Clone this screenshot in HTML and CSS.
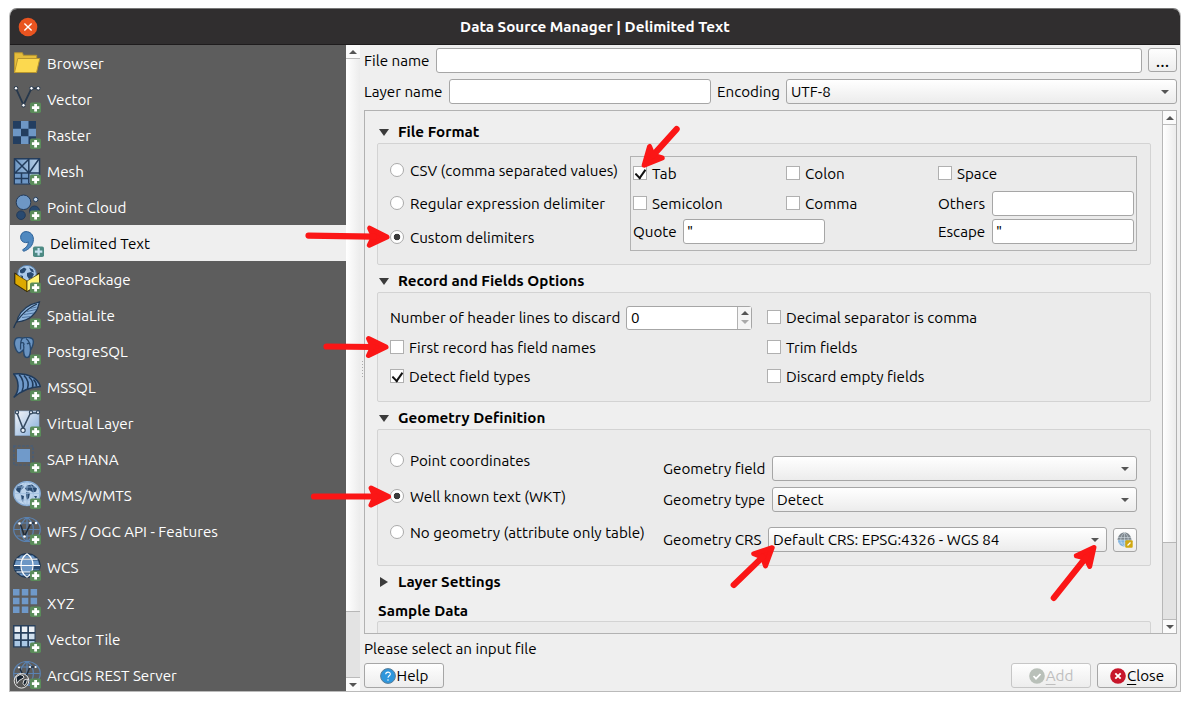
FILE: index.html
```html
<!DOCTYPE html>
<html lang="en">
<head>
<meta charset="utf-8">
<title>Data Source Manager | Delimited Text</title>
<link rel="stylesheet" href="styles.css">
</head>
<body>
<svg class="defs" width="0" height="0">
  <defs>
    <linearGradient id="pale" x1="0" y1="0" x2="1" y2="1"><stop offset="0" stop-color="#f4f6f9"/><stop offset="1" stop-color="#85add9"/></linearGradient>
    <linearGradient id="mid" x1="0" y1="0" x2="1" y2="0"><stop offset="0" stop-color="#6d97c4"/><stop offset="1" stop-color="#b9d0e8"/></linearGradient>
    <symbol id="plus" viewBox="0 0 28 28">
      <rect x="17" y="17.4" width="11" height="10.6" rx="1.8" fill="#5a8c5a"/>
      <path d="M22.600 19v7.400M18.900 22.700h7.400" stroke="#fff" stroke-width="2.800"/>
    </symbol>
    <symbol id="globe" viewBox="0 0 28 28">
      <ellipse cx="14" cy="12.500" rx="13.300" ry="12"/>
      <path d="M1 12.500h26M3.500 6h21M3.500 19h21M14 .5v24M14 .5C5.500 6 5.500 19 14 24.500M14 .5c8.500 5.500 8.500 18.500 0 24"/>
    </symbol>
  </defs>
</svg>
<div class="window">
  <header class="titlebar">
    <svg class="win-close" viewBox="0 0 20 20"><circle cx="10" cy="10" r="9.300" fill="#e95420"/><path d="M6.400 6.400l7.200 7.200M13.600 6.400l-7.200 7.200" stroke="#fff" stroke-width="1.400"/></svg>
    <h1>Data Source Manager | Delimited Text</h1>
  </header>
  <div class="body">
    <nav class="sources">
      <div class="source"><svg viewBox="0 0 28 28"><path d="M1.500 23.500V3.800h8l.8 2.500h13.400v4" fill="#e5bd3c" stroke="#b8962e"/><path d="M1.500 23.500L4.800 9.500h22L23.500 23.500z" fill="#fcd94f" stroke="#b8962e"/></svg><span>Browser</span></div>
      <div class="source"><svg viewBox="0 0 28 28"><path d="M3 3.300L10.500 20 18.500 3.300H25" fill="none" stroke="#27384c" stroke-width="1.800"/><g fill="#fff" stroke="#27384c"><circle cx="3" cy="3.300" r="1.800"/><circle cx="10.500" cy="20.300" r="1.800"/><circle cx="18.500" cy="3.300" r="1.800"/><circle cx="25.200" cy="3.300" r="1.800"/></g><use href="#plus"/></svg><span>Vector</span></div>
      <div class="source"><svg viewBox="0 0 28 28"><path d="M0 0h23v23H0z" fill="#233e60"/><path d="M8 0h7.500v7.700H8zM0 7.700h8v7.600H0zM15.500 7.700H23v7.600h-7.500zM8 15.300h7.500V23H8z" fill="#6e97c5"/><use href="#plus"/></svg><span>Raster</span></div>
      <div class="source"><svg viewBox="0 0 28 28"><rect x="1.500" y="1.800" width="25" height="25" fill="url(#mid)" stroke="#223b5b" stroke-width="1.500"/><path d="M2 17h14v9.500H2z" fill="#6e97c5"/><path d="M1.500 16h25M15.800 2v24.500M2 2l14 14M16 2L2 16M26 2L16 16M8.500 16v10.500M1.500 21.500h14.500" fill="none" stroke="#223b5b" stroke-width="1.500"/><use href="#plus"/></svg><span>Mesh</span></div>
      <div class="source"><svg viewBox="0 0 28 28"><g stroke="#223b5b"><circle cx="10.500" cy="9.300" r="7.300" fill="#6e97c5"/><circle cx="8" cy="22.200" r="4.300" fill="#294a70"/><circle cx="21.500" cy="18" r="5" fill="#294a70"/><circle cx="22.700" cy="6.500" r="2.200" fill="#c5d8ec"/></g><use href="#plus"/></svg><span>Point Cloud</span></div>
      <div class="source selected"><svg viewBox="0 0 28 28"><path d="M10 2.600C14.500 2.600 17.500 6 17.400 10.500 17.300 16 13.500 20.500 7.600 22.300L6.600 20.800C10.500 18.500 12.300 16 12.400 12.900 11.500 13.500 10.500 13.700 9.500 13.600 6.600 13.400 4.600 11.200 4.600 8.300 4.600 5 6.900 2.600 10 2.600z" fill="#5089c0" stroke="#2d6299"/><rect x="17" y="17.400" width="11" height="10.600" rx="1.800" fill="#4d8a83"/><path d="M22.600 19v7.400M18.900 22.700h7.400" stroke="#c9e3f2" stroke-width="2.200"/></svg><span>Delimited Text</span></div>
      <div class="source"><svg viewBox="0 0 28 28"><path d="M1.500 7.500L14 15l12.500-7.500V19L14 27 1.500 19z" fill="#111"/><ellipse cx="14" cy="8.700" rx="9.300" ry="8.300" fill="#abc9e8" stroke="#5a83b0"/><path d="M7 5l4-2.500 2.500 1.500-2 3.500-2.500 1-2-1zM16 2.500l4 2 1 3-3-1zM14 8l4-1 3 2-2 4-3 1-2-3zM7 10l3 1v3z" fill="#284a70"/><path d="M2 8.500L14 16v10.500L2 18.700z" fill="#dda900" stroke="#3a2d00" stroke-width=".7"/><path d="M26.500 8.500L14 16v10.500l12.500-7.800z" fill="#fff375" stroke="#3a2d00" stroke-width=".7"/><use href="#plus"/></svg><span>GeoPackage</span></div>
      <div class="source"><svg viewBox="0 0 28 28"><path d="M26.500.800C19 2.500 9.500 6 5 16.500L4 21c7-1 12-3 15-6 3-3 5-5 6-9z" fill="#8fb5dd" stroke="#203854" stroke-width="1.200"/><path d="M.700 27C3 20 11 9 24 3" fill="none" stroke="#203854" stroke-width="1.300"/><path d="M9 16.500l9-1M11 13.500l10-1.500M14 10.500l9-2M17.500 7.500l6-1.500" stroke="#3d638f" stroke-width=".8"/><use href="#plus"/></svg><span>SpatiaLite</span></div>
      <div class="source"><svg viewBox="0 0 28 28"><path d="M3 1.500C5 .300 7.500.600 9.500 1.200 12 .400 17 0 19.500 2 21.500 4.500 19.500 10 17.500 13 17 17 17.500 20.500 14 20.500 10.500 20.500 11 17 10.500 13 8.500 13.800 7.500 16.500 5.500 15.700 2.500 13.500-.500 5 3 1.500z" fill="#6a94c2" stroke="#28486c" stroke-width="1.400"/><path d="M9.500 1.200C6.500 4.500 8 9 7.500 12.500M10.500 13c1-2 0-3.500 0-5.500M13 1.500c3 2 4.500 6 4.500 11.500M8 6c2-1 3 0 3 2M14 7c1-1 3-1 3 0" fill="none" stroke="#28486c" stroke-width="1.300"/><use href="#plus"/></svg><span>PostgreSQL</span></div>
      <div class="source"><svg viewBox="0 0 28 28"><path d="M.700 1C15-.500 25 5 27.300 13.500 17 14 8 18 .700 24.500 7 18 6 7 .700 1z" fill="#6f99c9" stroke="#203b5b" stroke-width="1.500"/><path d="M6 1.500c5 5 5 12 3 17M11 2.500c4 4 5 9 3.500 13.500M16 4c3.500 3 4.500 6.500 3.500 10.500M20.500 6.500c2 2 3 4 3 7" fill="none" stroke="#203b5b" stroke-width="1.600"/><use href="#plus"/></svg><span>MSSQL</span></div>
      <div class="source"><svg viewBox="0 0 28 28"><rect x="2" y="2" width="24" height="24.500" fill="url(#pale)" stroke="#8fb0d3" stroke-width=".6"/><path d="M4 4l6 15.500L17.500 4H25" fill="none" stroke="#34495f" stroke-width="1.500"/><g fill="#e9f0f7" stroke="#34495f" stroke-width="1.200"><circle cx="4" cy="3.300" r="1.600"/><circle cx="10" cy="21.300" r="2.200"/><circle cx="18" cy="3.300" r="1.600"/><circle cx="25" cy="3.300" r="1.600"/></g><use href="#plus"/></svg><span>Virtual Layer</span></div>
      <div class="source"><svg viewBox="0 0 28 28"><rect x="1" y="1" width="19" height="19" fill="none" stroke="#485d76" stroke-width="1.700" stroke-dasharray="2.500 1.600"/><rect x="4" y="4" width="13" height="13" fill="#709aca"/><use href="#plus"/></svg><span>SAP HANA</span></div>
      <div class="source"><svg viewBox="0 0 28 28"><ellipse cx="14" cy="12.500" rx="13.300" ry="12" fill="#bcd3eb" stroke="#6b93c0" stroke-width="1.300"/><path d="M4 5.500l5-1.500 2 2-3 3-1 3-2-1-2-2zM14 4.500l5-1 5 4-1 3-3 1-3-2-3 .5-2-2.500zM8 14l3 1-1 6-2-3zM13 11l4 1-1 5-2 2-1-4zM21 15l3 0-1 3z" fill="#294a70"/><g fill="none" stroke="#9dbde0" stroke-width=".7"><use href="#globe"/></g><use href="#plus"/></svg><span>WMS/WMTS</span></div>
      <div class="source"><svg viewBox="0 0 28 28"><g fill="none" stroke="#5a82b1" stroke-width="1.200"><use href="#globe"/></g><path d="M7 6l4.500 13L18 6h5" fill="none" stroke="#202c3a" stroke-width="1.500"/><g fill="#fff"><circle cx="6.500" cy="6.500" r="1.300"/><circle cx="11.500" cy="19.500" r="1.300"/><circle cx="17.500" cy="6" r="1.300"/><circle cx="23" cy="6" r="1.300"/></g><use href="#plus"/></svg><span>WFS / OGC API - Features</span></div>
      <div class="source"><svg viewBox="0 0 28 28"><ellipse cx="14" cy="12.500" rx="13.300" ry="12" fill="#294a70" stroke="#1e3550"/><path d="M1.500 12.500L3 7.500h22l1.500 5v4h-25zM8 2.500h12l2 2.500H6zM6 20.500h16l-2 2H8z" fill="#6d97c5"/><path d="M1 12.500h26v3.500H1z" fill="#294a70"/><path d="M9 7h10v12H9z" fill="#6d97c5"/><path d="M1 12.500h26M3.500 6.200h21M3.500 19h21M14 .8C6 6 6 19 14 24.200M14 .8c8 5.200 8 18.200 0 23.400" fill="none" stroke="#fff" stroke-width="1.200"/><use href="#plus"/></svg><span>WCS</span></div>
      <div class="source"><svg viewBox="0 0 28 28"><path d="M0 0h6.500v6.500H0zM8.800 0h6.500v6.500H8.800zM17.600 0h6.500v6.500h-6.500zM0 8.800h6.500v6.500H0zM8.800 8.800h6.500v6.500H8.800zM17.600 8.800h6.500v6.500h-6.500zM0 17.600h6.500v6.500H0zM8.800 17.600h6.500v6.500H8.800z" fill="#6f99c9"/><use href="#plus"/></svg><span>XYZ</span></div>
      <div class="source"><svg viewBox="0 0 28 28"><path d="M0 0h22.500v22.500H0z" fill="#28405c"/><path d="M1.500 1.500H7V7H1.500zM8.800 1.500h5.500V7H8.800zM16 1.500h5.500V7H16z" fill="#eef2f6"/><path d="M1.500 8.800H7v5.500H1.500zM8.800 8.800h5.500v5.500H8.800zM16 8.800h5.500v5.500H16z" fill="#d0dfed"/><path d="M1.500 16H7v5.300H1.500zM8.800 16h5.500v5.300H8.800zM16 16h5.500v5.300H16z" fill="#a9c7e5"/><use href="#plus"/></svg><span>Vector Tile</span></div>
      <div class="source"><svg viewBox="0 0 28 28"><g fill="none" stroke="#5a82b1" stroke-width="1.200"><use href="#globe"/></g><path d="M6 6l6 12L17 6h6" fill="none" stroke="#202c3a" stroke-width="1.500"/><g fill="#fff"><circle cx="6" cy="6.500" r="1.100"/><circle cx="17" cy="6" r="1.100"/><circle cx="22.500" cy="6" r="1.100"/></g><circle cx="8.500" cy="19.800" r="7.300" fill="#555" stroke="#e6e6e6" stroke-width="1"/><path d="M3 16l4-2.500 3 1 1 2-3 2-2 1-2 3zM11 19l3.500-1-1 4-2 2.500-1.500-2z" fill="#17222e" stroke="#eee" stroke-width=".9"/><use href="#plus"/></svg><span>ArcGIS REST Server</span></div>
    </nav>
    <div class="scroll side-scroll"><i class="cap up"></i><i class="thumb"></i><i class="groove"></i><i class="cap down"></i></div>
    <main class="panel">
      <div class="line file-line"><label>File name</label><div class="field"></div><div class="button dots">...</div></div>
      <div class="line layer-line"><label>Layer name</label><div class="field"></div><label>Encoding</label><div class="combo">UTF-8</div></div>
      <div class="frame">
        <div class="content">
          <h2 class="first"><i class="tri open"></i>File Format</h2>
          <section class="group format">
            <div class="radios">
              <label><i class="radio"></i>CSV (comma separated values)</label>
              <label><i class="radio"></i>Regular expression delimiter</label>
              <label><i class="radio on"></i>Custom delimiters</label>
            </div>
            <div class="delims">
              <label><i class="check on"></i>Tab</label><label><i class="check"></i>Colon</label><label><i class="check"></i>Space</label>
              <label><i class="check"></i>Semicolon</label><label><i class="check"></i>Comma</label><div class="pair others"><span>Others</span><div class="field"></div></div>
              <div class="pair quote"><span>Quote</span><div class="field">"</div></div><div class="pair others"><span>Escape</span><div class="field">"</div></div>
            </div>
          </section>
          <h2><i class="tri open"></i>Record and Fields Options</h2>
          <section class="group records">
            <div class="pair header-count"><span>Number of header lines to discard</span><div class="spin"><span>0</span><i></i></div></div><label><i class="check"></i>Decimal separator is comma</label>
            <label><i class="check"></i>First record has field names</label><label><i class="check"></i>Trim fields</label>
            <label><i class="check on"></i>Detect field types</label><label><i class="check"></i>Discard empty fields</label>
          </section>
          <h2><i class="tri open"></i>Geometry Definition</h2>
          <section class="group geometry">
            <div class="radios">
              <label><i class="radio"></i>Point coordinates</label>
              <label><i class="radio on"></i>Well known text (WKT)</label>
              <label><i class="radio"></i>No geometry (attribute only table)</label>
            </div>
            <div class="geo-fields">
              <div class="pair"><span>Geometry field</span><div class="combo"></div></div>
              <div class="pair"><span>Geometry type</span><div class="combo">Detect</div></div>
              <div class="pair crs"><span>Geometry CRS</span><div class="combo">Default CRS: EPSG:4326 - WGS 84</div>
                <div class="button pick"><svg viewBox="0 0 16 16"><path d="M.500 8C1 3 4 .500 7.500.500S14 3 14.500 8z" fill="#7f888f"/><path d="M1 8h13c0 4-3 6.500-6.500 6.500S1 12 1 8z" fill="#7fb3e0"/><path d="M1 5.500h13M.500 8h14M2 11h11M7.500.500v14M7.500.500c-5 4-5 10 0 14M7.500.500c5 4 5 10 0 14" fill="none" stroke="#dfe8ef" stroke-width=".5"/><rect x="8.300" y="8.300" width="7.400" height="7.400" rx="1" fill="#d0a812"/><path d="M10.500 13.500l3-3" stroke="#fff" stroke-width="1.300"/></svg></div>
              </div>
            </div>
          </section>
          <h2 class="settings"><i class="tri shut"></i>Layer Settings</h2>
          <h2 class="sample">Sample Data</h2>
          <section class="group preview"></section>
        </div>
        <div class="scroll form-scroll"><i class="cap up"></i><i class="thumb"></i><i class="groove"></i><i class="cap down"></i></div>
      </div>
      <p class="status">Please select an input file</p>
      <footer class="actions">
        <div class="button"><svg viewBox="0 0 16 16"><circle cx="8" cy="8" r="7.400" fill="#2e96dc" stroke="#5b7d96"/><path d="M5.700 6.200C5.800 3.400 10.400 3.500 10.300 6.200 10.200 7.800 8 7.800 8 9.800M8 11.200v1.500" fill="none" stroke="#fff" stroke-width="1.100"/></svg>Help</div>
        <div class="button disabled"><svg viewBox="0 0 16 16"><circle cx="8" cy="8" r="7.800" fill="#b9c0b9"/><path d="M4.500 8l2.500 2.700 4.500-4.700" fill="none" stroke="#fff" stroke-width="1.800"/></svg><span><u>A</u>dd</span></div>
        <div class="button"><svg viewBox="0 0 16 16"><circle cx="8" cy="8" r="7.800" fill="#c7162b"/><path d="M5.300 5.300l5.400 5.400M10.700 5.300l-5.400 5.400" stroke="#fff" stroke-width="1.900"/></svg><span><u>C</u>lose</span></div>
      </footer>
    </main>
  </div>
</div>
<svg class="grip" viewBox="0 0 3 17"><path d="M1.500 0v17" stroke="#aaa" stroke-dasharray="1 2"/></svg>
<svg class="arrows" viewBox="0 0 1190 701">
  <defs><path id="head" d="M-2.500 0L-20-8.500-16 0-20 8.500z" stroke-width="5"/></defs>
  <g transform="translate(389.500 237) rotate(1)"><use href="#head"/><path d="M-81 0H-16"/></g>
  <g transform="translate(388.500 347)"><use href="#head"/><path d="M-62-.500L-16 0"/></g>
  <g transform="translate(391 496.500)"><use href="#head"/><path d="M-77 0H-16"/></g>
  <g transform="translate(642.500 167) rotate(132)"><use href="#head"/><path d="M-51 0H-16"/></g>
  <g transform="translate(774 546) rotate(-44)"><use href="#head"/><path d="M-56 0H-16"/></g>
  <g transform="translate(1095.500 545.500) rotate(-51.500)"><use href="#head"/><path d="M-67 0H-16"/></g>
</svg>
</body>
</html>
```
FILE: styles.css
```css
* { box-sizing: border-box; }
body { margin: 0; width: 1190px; height: 701px; overflow: hidden; background: #fff; padding: 8px 9px 0; font: 15.2px/20px "Ubuntu", "Noto Sans", sans-serif; color: #000; }
h1, h2, p { margin: 0; font-size: inherit; }
.defs { position: absolute; }
.window { width: 1172px; height: 684px; border: 1px solid #bababa; border-top-color: #777; border-radius: 8px 8px 0 0; background: #efefef; overflow: hidden; }
.titlebar { height: 36px; background: #302e2f; border-bottom: 1px solid #1e1c1d; display: grid; grid-template-columns: 36px 1fr 36px; align-items: center; justify-items: center; }
.titlebar h1 { color: #fff; text-align: center; font-weight: 700; }
.win-close { width: 20px; height: 20px; }
.body { display: grid; grid-template-columns: 336px 14px 1fr; height: 646px; }
.sources { background: #5d5d5d; color: #fff; overflow: hidden; }
.source { height: 36px; display: flex; align-items: center; gap: 6px; padding-left: 3px; }
.source svg { width: 28px; height: 28px; flex: none; }
.source span { padding-top: 1px; white-space: nowrap; }
.selected { background: #efefef; color: #000; padding-left: 6px; }
.scroll { display: flex; flex-direction: column; }
.cap { height: 14px; flex: none; background: #fbfbfb; display: flex; align-items: center; justify-content: center; }
.cap::before { content: ""; border: 4px solid transparent; }
.up { border-bottom: 1px solid #bbb; }
.up::before { border-top: 0; border-bottom-color: #555; }
.down { border-top: 1px solid #bbb; }
.down::before { border-bottom: 0; border-top-color: #555; }
.thumb { background: linear-gradient(90deg, #fff, #ececec); border-bottom: 1px solid #b7b7b7; flex: none; }
.groove { flex: 1; background: #e3e3e3; }
.side-scroll .thumb { height: 553px; }
.panel { padding: 3px 3px 0 4px; display: flex; flex-direction: column; }
.line { display: grid; align-items: center; height: 25px; margin-bottom: 6px; }
.file-line { grid-template-columns: 72px 706px 35px; }
.file-line .button { margin-left: 6px; height: 24px; align-self: start; font-size: 18px; }
.layer-line { grid-template-columns: 85px 262px 6px 69px 391px; }
.layer-line label:nth-of-type(2) { grid-column: 4; }
.field, .combo, .spin, .button { height: 25px; border: 1px solid #a6a6a6; border-radius: 3px; background: #fff; }
.field, .combo { padding: 0 4px; line-height: 23px; white-space: nowrap; }
.delims .field { padding-left: 3px; }
.combo { background: linear-gradient(#fff, #ececec); display: flex; justify-content: space-between; align-items: center; padding-right: 7px; }
.combo::after { content: ""; border: 4px solid transparent; border-bottom: 0; border-top-color: #555; margin-left: auto; }
.button { background: linear-gradient(#fefefe, #ededed); display: flex; align-items: center; justify-content: center; }
.frame { height: 524px; border: 1px solid #b2b2b2; display: grid; grid-template-columns: 1fr 14px; overflow: hidden; }
.content { padding: 0 11px 0 12px; overflow: hidden; height: 522px; }
.form-scroll { border-left: 1px solid #b7b7b7; height: 522px; }
.form-scroll .thumb { height: 418px; }
h2 { height: 27px; display: flex; align-items: center; font-weight: 700; padding: 5px 0 0; }
h2.first { height: 32px; padding-top: 10px; }
.tri { width: 21px; flex: none; display: flex; padding-left: 2px; }
.tri::before { content: ""; border: 5.5px solid transparent; }
.open::before { border-bottom: 0; border-top: 7px solid #3b3b3b; }
.shut::before { border-right: 0; border-left: 8px solid #3b3b3b; margin-left: 1px; }
.group { border: 1px solid #d3d3d3; border-radius: 2px; background: #ebebeb; }
.format { height: 122px; display: grid; grid-template-columns: 240px 507px; padding: 12px 0 0 12px; }
.format .radios { display: grid; grid-template-rows: 33px 33px 35px; margin-top: -2px; }
label, .pair { display: flex; align-items: center; white-space: nowrap; }
.radio { width: 14px; height: 14px; flex: none; border: 1px solid #aaa; border-radius: 50%; background: #fff; margin: 0 6px 2px 0; }
.radio.on { background: radial-gradient(circle, #3b3b3b 0 3px, #fff 3.6px); }
.check { width: 14px; height: 14px; flex: none; border: 1px solid #b0b0b0; background: #fff; margin: 0 5px 1px 0; display: flex; justify-content: center; }
.check.on::before { content: ""; width: 5px; height: 9px; border: solid #111; border-width: 0 2px 2px 0; transform: rotate(35deg) skewY(10deg); }
.delims { height: 95px; border: 1px solid #b2b2b2; display: grid; grid-template: 33px 27px 29px / 153px 152px 196px; padding-left: 2px; }
.others .field { width: 142px; margin-left: auto; }
.quote { grid-column: span 2; }
.quote span { width: 50px; }
.quote .field { width: 142px; }
.records { height: 110px; display: grid; grid-template: 31px 29px 29px / 377px 1fr; padding: 9px 0 0 12px; }
.header-count span:first-child { width: 236px; }
.spin { width: 126px; height: 24px; display: flex; justify-content: space-between; line-height: 22px; padding-left: 4px; }
.header-count .spin span { width: auto; }
.spin i { width: 14px; border-left: 1px solid #b2b2b2; background: #f5f5f5; display: flex; flex-direction: column; align-items: center; justify-content: space-evenly; }
.spin i::before, .spin i::after { content: ""; border: 4px solid transparent; }
.spin i::before { border-top: 0; border-bottom-color: #555; }
.spin i::after { border-bottom: 0; border-top-color: #aaa; }
.geometry { height: 137px; display: grid; grid-template-columns: 273px 474px; padding: 13px 0 0 12px; }
.geometry .radios { display: grid; grid-template-rows: 36px 36px 36px; }
.geo-fields { display: grid; grid-template-rows: 25px 25px 25px; row-gap: 6px; padding-top: 13px; }
.geo-fields span { width: 109px; }
.geo-fields .combo { width: 365px; }
.geo-fields .crs { margin-top: 9px; height: 25px; }
.geo-fields .crs span { width: 105px; }
.geo-fields .crs .combo { width: 339px; }
.button.pick { width: 24px; height: 24px; margin-left: 6px; }
.pick svg { width: 16px; height: 16px; }
h2.settings { height: 30px; padding-top: 2px; }
h2.sample { height: 25px; padding: 5px 0 0 1px; }
.preview { height: 30px; }
.status { height: 28px; padding-top: 5px; margin-bottom: 1px; }
.actions { display: grid; grid-template-columns: 80px 1fr 80px 80px; column-gap: 6px; }
.actions .disabled { grid-column: 3; color: #bebebe; border-color: #c6c6c6; }
.actions svg { width: 16px; height: 16px; margin-right: 1px; }
u { text-underline-offset: 3px; }
.grip { position: absolute; left: 361px; top: 361px; width: 3px; height: 17px; }
.arrows { position: absolute; left: 0; top: 0; width: 1190px; height: 701px; pointer-events: none; fill: #fb1616; stroke: #fb1616; stroke-width: 6.2; stroke-linecap: round; stroke-linejoin: round; }
```
